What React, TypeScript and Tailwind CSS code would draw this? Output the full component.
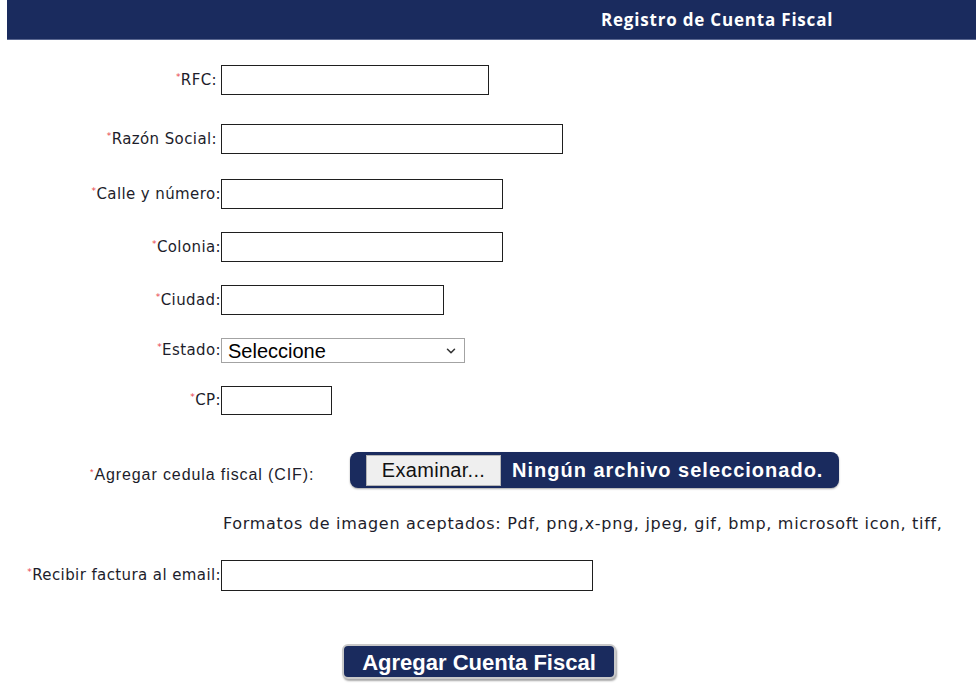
import { ChevronDown } from "lucide-react";

const fields = [
  { label: "RFC:", width: "w-[268px]", gap: "mt-[26px]", spaced: true },
  { label: "Razón Social:", width: "w-[342px]", gap: "mt-[29px]", spaced: true },
  { label: "Calle y número:", width: "w-[282px]", gap: "mt-[25px]", spaced: false },
  { label: "Colonia:", width: "w-[282px]", gap: "mt-[23px]", spaced: false },
  { label: "Ciudad:", width: "w-[223px]", gap: "mt-[23px]", spaced: false },
];

function Star() {
  return <span className="relative -top-[3px] text-[9px] leading-none text-[#e8454a]">*</span>;
}

function Label({ text, spaced }: { text: string; spaced?: boolean }) {
  return (
    <label
      className={`flex w-[221px] shrink-0 items-center justify-end whitespace-nowrap text-[15px] tracking-[0.4px] text-[#1d1d2b] ${spaced ? "pr-[4px]" : ""}`}
      style={{ fontFamily: '"DejaVu Sans", Verdana, sans-serif' }}
    >
      <Star />
      {text}
    </label>
  );
}

export default function App() {
  return (
    <div className="min-h-[683px] w-[976px] bg-white" style={{ fontFamily: '"DejaVu Sans", sans-serif' }}>
      <div className="pl-[7px]">
        <div className="flex h-[39px] items-center bg-[#1a2b5e] pl-[594px] shadow-[0_1px_0_#5a6790]">
          <h1
            className="text-[17px] font-bold tracking-[0.8px] text-white"
            style={{ fontFamily: '"Open Sans", sans-serif' }}
          >
            Registro de Cuenta Fiscal
          </h1>
        </div>
      </div>

      {fields.map((f) => (
        <div key={f.label} className={`flex items-center ${f.gap}`}>
          <Label text={f.label} spaced={f.spaced} />
          <input
            type="text"
            className={`h-[30px] border border-[#1f1f1f] bg-white ${f.width}`}
          />
        </div>
      ))}

      <div className="mt-[23px] flex items-center">
        <Label text="Estado:" />
        <div className="relative flex h-[25px] w-[244px] items-center border border-[#a3a3a3] bg-white pl-[6px]">
          <span
            className="text-[20px] text-black"
            style={{ fontFamily: '"Liberation Sans", Arial, sans-serif' }}
          >
            Seleccione
          </span>
          <ChevronDown className="absolute right-[6px] h-[14px] w-[14px] text-[#333]" strokeWidth={2.6} />
        </div>
      </div>

      <div className="mt-[23px] flex items-center">
        <Label text="CP:" />
        <input type="text" className="h-[29px] w-[111px] border border-[#1f1f1f] bg-white" />
      </div>

      <div className="mt-[37px] flex items-center pl-[90px]">
        <label
          className="mt-[10px] flex w-[260px] shrink-0 items-center whitespace-nowrap text-[16px] tracking-[0.9px] text-[#1d1d2b]"
          style={{ fontFamily: '"Liberation Sans", Arial, sans-serif' }}
        >
          <Star />
          Agregar cedula fiscal (CIF):
        </label>
        <div className="flex h-[36px] w-[489px] items-center rounded-[8px] bg-[#1a2b5e] pl-[16px] shadow-[0_1px_2px_rgba(0,0,0,0.35)]">
          <div
            className="flex h-[31px] w-[135px] items-center justify-center border border-[#b5b5b5] bg-[#efefef] text-[20px] tracking-[0.3px] text-[#111]"
            style={{ fontFamily: '"Liberation Sans", Arial, sans-serif' }}
          >
            Examinar...
          </div>
          <span
            className="ml-[11px] whitespace-nowrap text-[20px] font-bold tracking-[1px] text-white"
            style={{ fontFamily: '"Liberation Sans", Arial, sans-serif' }}
          >
            Ningún archivo seleccionado.
          </span>
        </div>
      </div>

      <p className="mt-[24px] whitespace-nowrap pl-[223px] text-[16px] tracking-[0.7px] text-[#1d1d2b]">
        Formatos de imagen aceptados: Pdf, png,x-png, jpeg, gif, bmp, microsoft icon, tiff,
      </p>

      <div className="mt-[24px] flex items-center">
        <Label text="Recibir factura al email:" />
        <input type="text" className="h-[31px] w-[372px] border border-[#1f1f1f] bg-white" />
      </div>

      <div className="mt-[53px] flex pl-[342px]">
        <button
          className="h-[35px] w-[274px] rounded-[6px] border-2 border-[#c9c9c9] bg-[#1a2b5e] text-[22px] font-bold text-white shadow-[1px_2px_2px_rgba(0,0,0,0.35)]"
          style={{ fontFamily: '"Liberation Sans", Arial, sans-serif' }}
        >
          Agregar Cuenta Fiscal
        </button>
      </div>
    </div>
  );
}
